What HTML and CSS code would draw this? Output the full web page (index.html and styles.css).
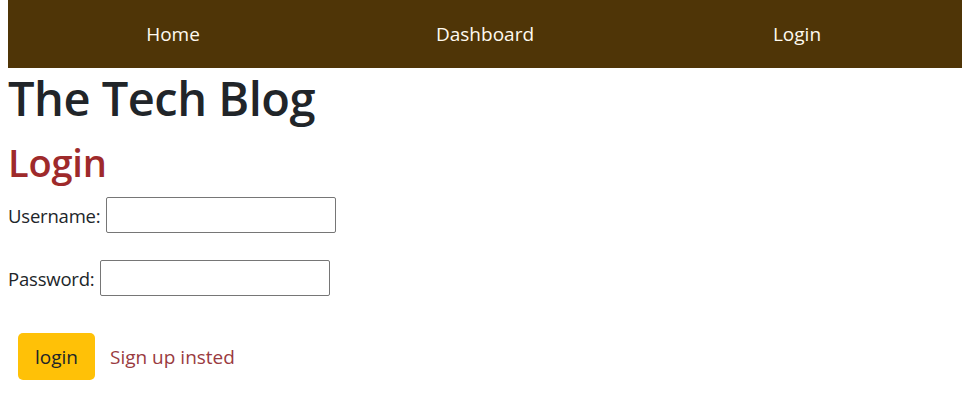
FILE: index.html
```html
<!DOCTYPE html>
<html lang="en">
<head>
<meta charset="utf-8">
<title>The Tech Blog</title>
<link rel="stylesheet" href="styles.css">
</head>
<body>
<nav class="nav">
  <a class="nav-link" href="#">Home</a>
  <a class="nav-link" href="#">Dashboard</a>
  <a class="nav-link" href="#">Login</a>
</nav>
<h1 class="title">The Tech Blog</h1>
<h2 class="subtitle">Login</h2>
<form class="login-form">
  <div class="row">
    <label class="label" for="username">Username:</label>
    <input class="field" id="username" type="text">
  </div>
  <div class="row">
    <label class="label" for="password">Password:</label>
    <input class="field" id="password" type="password">
  </div>
  <div class="actions">
    <button class="btn" type="button">login</button>
    <a class="signup" href="#">Sign up insted</a>
  </div>
</form>
</body>
</html>
```

FILE: styles.css
```css
* { box-sizing: border-box; }
body {
  margin: 0 8px;
  font-family: "Open Sans", "Noto Sans", sans-serif;
  font-size: 19px;
  color: #212529;
  background: #fff;
}
.nav {
  display: flex;
  height: 68px;
  align-items: center;
  padding: 0 9px;
  background: #4f3507;
}
.nav-link {
  flex: 1;
  text-align: center;
  color: #fffaf0;
  text-decoration: none;
  font-size: 19px;
}
.title {
  margin: 0 0 10px;
  font-size: 47px;
  font-weight: 600;
  letter-spacing: -0.5px;
  line-height: 60px;
}
.subtitle {
  margin: 0 0 10px;
  font-size: 38px;
  font-weight: 600;
  letter-spacing: -0.2px;
  line-height: 48px;
  color: #9e2a2b;
}
.login-form {
  display: flex;
  flex-direction: column;
  align-items: flex-start;
  gap: 27px;
  padding-top: 1px;
}
.row {
  display: flex;
  align-items: center;
  gap: 6px;
}
.label {
  font-size: 18.5px;
  letter-spacing: -0.2px;
}
.field {
  width: 230px;
  height: 36px;
  border: 1px solid #767676;
  border-radius: 2px;
  font-size: 19px;
}
.actions {
  display: flex;
  align-items: center;
  gap: 15px;
  margin-top: 10px;
  margin-left: 10px;
}
.btn {
  height: 47px;
  padding: 0 17px;
  border: 0;
  border-radius: 5px;
  background: #ffc107;
  color: #212529;
  font-family: inherit;
  font-size: 19px;
}
.signup {
  color: #9a3b3f;
  text-decoration: none;
}
```
